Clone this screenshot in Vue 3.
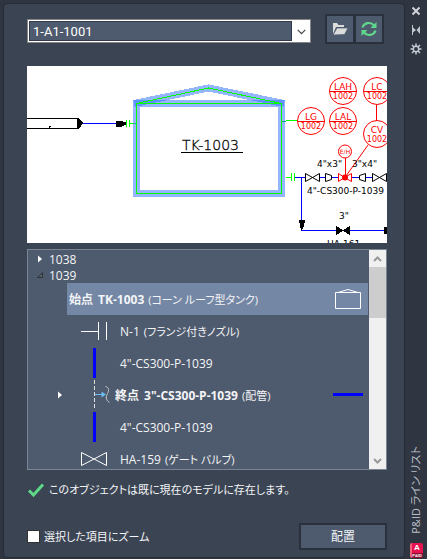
<script setup>
import { ref } from 'vue'

const line = ref('1-A1-1001')
const zoomToItem = ref(false)

const items = [
  { icon: 'none', role: '始点', tag: 'TK-1003', kind: '(コーン ルーフ型タンク)', symbol: 'tank', selected: true },
  { icon: 'nozzle', tag: 'N-1', kind: '(フランジ付きノズル)' },
  { icon: 'pipe', tag: '4"-CS300-P-1039' },
  { icon: 'branch', role: '終点', tag: '3"-CS300-P-1039', kind: '(配管)', symbol: 'pipe', expandable: true },
  { icon: 'pipe', tag: '4"-CS300-P-1039' },
  { icon: 'valve', tag: 'HA-159', kind: '(ゲート バルブ)' }
]

const balloons = [
  { x: 343, y: 91, top: 'LAH', bar: true },
  { x: 377, y: 91, top: 'LC', bar: true },
  { x: 311, y: 121, top: 'LG', bar: true },
  { x: 343, y: 121, top: 'LAL', bar: true },
  { x: 377, y: 134, top: 'CV', bar: false }
]
</script>

<template>
  <div class="palette">
    <main class="panel">
      <div class="toolbar">
        <div class="combo">
          <select v-model="line" aria-label="ライン番号">
            <option>1-A1-1001</option>
          </select>
          <svg class="chevron" viewBox="0 0 9 6" aria-hidden="true"><path d="M.7.8 4.5 4.6 8.3.8" /></svg>
        </div>
        <div class="tools">
          <button type="button" aria-label="開く">
            <svg width="16" height="14" viewBox="0 0 16 14"><path d="M1 12V1h4l1.5 2H12v2H4z" fill="#dcdcdc" /><path d="M1 13 5 6h11l-3.500 6.500z" fill="#dcdcdc" stroke="#4e5a6d" stroke-width=".7" /></svg>
          </button>
          <button type="button" aria-label="更新">
            <svg width="18" height="16" viewBox="0 0 18 16"><g fill="none" stroke="#5fd88a" stroke-width="2.200"><path d="M2.500 6.500C4 1.500 11 .5 14 4.500" /><path d="M15.500 9.500C14 14.500 7 15.500 4 11.500" /></g><path d="M16.500 1v6h-6zM1.500 15V9h6z" fill="#5fd88a" /></svg>
          </button>
        </div>
      </div>

      <svg class="preview" viewBox="27 66 360 177" role="img" aria-label="P&amp;ID プレビュー">
        <g shape-rendering="crispEdges" fill="none">
          <path d="M27 118.500h50M27 128.500h50" stroke="#000" />
          <path d="M77 118h2l4 5-4 6h-2z" fill="#000" />
          <path d="M49 126h2v1h-1v1h-1z" fill="#000" />
          <path d="M83 123.500h34" stroke="#00f" />
          <path d="M116 121h5l6 2v1l-6 3h-5z" fill="#000" />
          <path d="M126.500 120v7M129.500 120v7M129 123.500h8" stroke="#0f0" />
          <g stroke="#2a6eff" stroke-opacity=".5" stroke-width="7">
            <path d="M136.500 103.500h145v90h-145z" />
            <path d="M134 103.500 208.500 88l75.500 15.500" />
          </g>
          <path d="M136.500 103.500h145v90h-145zM136.500 103.500l72-15.500 73 15.500" stroke="#0f0" />
          <path d="M282 121.500h4" stroke="#12a59a" />
          <path d="M286 120.500h12" stroke="#0f0" />
          <path d="M286 177.500h5M291.500 173v8M294.500 173v8" stroke="#0f0" />
          <path d="M295 177.500h92M301.500 177v53.500H387" stroke="#00f" />
          <path d="M299 220h6l-1 6-2 4h-1l-1-4zM336 226l7 4 7-4v9l-7-4-7 4zM384 227h3v7h-3z" fill="#000" />
        </g>
        <g fill="#fff" stroke="#000">
          <path d="M305.500 173.500l7 4 7-4v8l-7-4-7 4zM325.500 173.500l6 2v4l-6 2zM365.500 173.500l-6 2v4l6 2zM372.500 173.500l7 4 7-4v8l-7-4-7 4z" />
          <path d="M338.500 173.500l6 4 7-4v8l-7-4-6 4z" stroke="red" />
        </g>
        <circle cx="345" cy="177.500" r="3" fill="red" />
        <g fill="none" stroke="red">
          <path d="M376.500 105v16M368 145l-22 31M345.500 158v17" />
          <circle cx="345" cy="151.500" r="6.500" />
          <g v-for="b in balloons" :key="b.top">
            <circle :cx="b.x" :cy="b.y" r="13.500" />
            <path v-if="b.bar" :d="`M${b.x - 13} ${b.y + 0.5}h26`" shape-rendering="crispEdges" />
          </g>
        </g>
        <g class="cad red" text-anchor="middle">
          <template v-for="b in balloons" :key="b.top">
            <text class="letters" :x="b.x" :y="b.y - 1">{{ b.top }}</text>
            <text :x="b.x" :y="b.y + 8">1002</text>
          </template>
          <text class="tiny" x="345" y="154">E/H</text>
        </g>
        <g class="cad">
          <text class="name" x="182" y="150">TK-1003</text>
          <path d="M181 152.500h62" stroke="#000" shape-rendering="crispEdges" />
          <text x="317" y="167">4"x3"</text>
          <text x="352" y="167">3"x4"</text>
          <text x="307" y="194">4"-CS300-P-1039</text>
          <text x="339" y="219">3"</text>
          <text x="327" y="247">HA-161</text>
        </g>
      </svg>

      <div class="tree-box">
        <ul class="tree" role="tree">
          <li class="group" role="treeitem">
            <svg width="8" height="10" viewBox="0 0 8 10"><path d="M2 1.500v7l4-3.500z" fill="#fff" /></svg>
            <span>1038</span>
          </li>
          <li class="group" role="treeitem">
            <svg width="8" height="10" viewBox="0 0 8 10"><path d="M6.500 2.500v5h-5z" fill="#595f68" stroke="#2e333b" /></svg>
            <span>1039</span>
          </li>
          <li
            v-for="(item, i) in items"
            :key="i"
            class="item"
            :class="{ selected: item.selected, branch: item.expandable }"
            role="treeitem"
          >
            <svg v-if="item.expandable" class="expander" width="8" height="10" viewBox="0 0 8 10"><path d="M2 1.500v7l4-3.500z" fill="#fff" /></svg>
            <svg v-if="item.icon !== 'none'" class="icon" width="30" height="32" viewBox="0 0 30 32" fill="none">
              <path v-if="item.icon === 'nozzle'" d="M0 16.500h17.500M17.500 7v18M25.500 7v18" stroke="#fff" />
              <path v-else-if="item.icon === 'pipe'" d="M13.500 1v30" stroke="#00f" stroke-width="3" />
              <path v-else-if="item.icon === 'valve'" d="M.5 9.500 25.500 22.500V9.500L.5 22.500z" stroke="#fff" />
              <g v-else>
                <path d="M13.500 1v30" stroke="#ddd" stroke-dasharray="4 2" />
                <path d="M14 15.500h8" stroke="#6bbcf7" />
                <path d="M20.500 12.500 25 15.500l-4.500 3z" fill="#6bbcf7" />
                <path d="M24.500 7.500c4 1 3.500 4 2 7s-2.500 6 2 9" stroke="#c4c8ce" />
              </g>
            </svg>
            <span class="label">
              <b v-if="item.role"><span class="role">{{ item.role }}</span>{{ item.tag }}</b>
              <template v-else>{{ item.tag }}</template>
              <span v-if="item.kind" class="kind">{{ item.kind }}</span>
            </span>
            <svg v-if="item.symbol === 'tank'" class="symbol" width="30" height="22" viewBox="0 0 30 22">
              <path d="M2.500 4.500h25v16h-25zM5 4.500 15 1.500l10 3" fill="none" stroke="#fff" />
            </svg>
            <svg v-else-if="item.symbol" class="symbol" width="30" height="4" viewBox="0 0 30 4"><path d="M0 0h30v3H0z" fill="#00f" /></svg>
          </li>
        </ul>
        <div class="scrollbar">
          <button type="button" aria-label="上へスクロール"><svg width="9" height="6" viewBox="0 0 9 6"><path d="M1 5 4.500 1.500 8 5" /></svg></button>
          <div class="track"><div class="thumb"></div></div>
          <button type="button" aria-label="下へスクロール"><svg width="9" height="6" viewBox="0 0 9 6"><path d="M1 1 4.500 4.500 8 1" /></svg></button>
        </div>
      </div>

      <p class="status">
        <svg width="18" height="14" viewBox="0 0 18 14"><path d="M2 7.500 6.500 12 16 1.500" fill="none" stroke="#5fd88a" stroke-width="3" /></svg>
        このオブジェクトは既に現在のモデルに存在します。
      </p>

      <div class="footer">
        <label><input v-model="zoomToItem" type="checkbox" />選択した項目にズーム</label>
        <button type="button" class="place">配置</button>
      </div>
    </main>

    <aside class="strip">
      <button type="button" aria-label="閉じる"><svg width="10" height="10" viewBox="0 0 10 10"><path d="M1.500 1.500l7 7M8.500 1.500l-7 7" stroke="#d0d3d8" stroke-width="2" /></svg></button>
      <button type="button" aria-label="自動的に隠す"><svg width="10" height="10" viewBox="0 0 10 10" fill="#c2c6cc"><path d="M1 0h1v10H1zM2 2.500 5 5 2 7.500zM9 1v8L5.500 5z" /></svg></button>
      <button type="button" aria-label="プロパティ"><svg width="12" height="12" viewBox="0 0 12 12" fill="none" stroke="#c8ccd2"><circle cx="6" cy="6" r="2.700" stroke-width="1.400" /><path d="M6 .5v2.500M6 9v2.500M.5 6H3M9 6h2.500M2 2l2 2M8 8l2 2M10 2 8 4M4 8l-2 2" stroke-width="1.500" /></svg></button>
      <h1>P&amp;ID ライン リスト</h1>
      <div class="logo"><b>A</b><small>P&amp;ID</small></div>
    </aside>
  </div>
</template>

<style>
body {
  margin: 0;
  background: #2f3541;
}
</style>

<style scoped>
* {
  box-sizing: border-box;
}
.palette {
  display: grid;
  grid-template-columns: minmax(0, 1fr) 22px;
  height: 100vh;
  min-height: 480px;
  padding: 3px 0 1px 3px;
  background: #2f3541;
  color: #f4f5f7;
  font: 12px/16px "Open Sans", "Noto Sans CJK JP", sans-serif;
  font-feature-settings: "palt";
}
button {
  padding: 0;
  border: 0;
  color: inherit;
  font: inherit;
  background: none;
  display: flex;
  align-items: center;
  justify-content: center;
}
.panel {
  display: flex;
  flex-direction: column;
  min-height: 0;
  padding: 10px 17px 7px 23px;
  background: #3b4453;
  border: 1px solid #262c36;
  border-radius: 4px;
}
.toolbar {
  display: flex;
  align-items: center;
  gap: 14px;
  padding-right: 3px;
  margin-bottom: 22px;
}
.combo {
  position: relative;
  flex: 1;
  height: 24px;
  margin-top: 3px;
  padding: 1px;
  border: 1px solid #858585;
  background: #fff;
}
.combo select {
  appearance: none;
  display: block;
  width: calc(100% - 17px);
  height: 20px;
  padding: 1px 3px 0;
  border: 1px solid #343c4b;
  border-radius: 0;
  background: #4e5a6d;
  color: #fff;
  font: 13px/18px Roboto, sans-serif;
}
.chevron {
  position: absolute;
  right: 4px;
  top: 9px;
  width: 9px;
  height: 6px;
  fill: none;
  stroke: #444;
  stroke-width: 1.2;
  pointer-events: none;
}
.tools {
  display: flex;
  gap: 3px;
  padding: 2px;
  background: #2a303c;
}
.tools button {
  width: 26px;
  height: 26px;
  background: #4e5a6d;
}
.preview {
  display: block;
  flex: none;
  width: 100%;
  background: #fff;
}
.cad {
  font: 9px "DejaVu Sans", sans-serif;
  fill: #000;
}
.red {
  fill: red;
  font-size: 8px;
}
.letters {
  font-size: 9px;
}
.tiny {
  font-size: 6px;
}
.name {
  font-size: 14px;
  font-weight: 200;
  stroke: #000;
  stroke-width: 0.3;
}
.tree-box {
  display: flex;
  flex: 1;
  min-height: 0;
  margin-top: 6px;
  border: 1px solid #7b8493;
  background: #4e5a6d;
  overflow: hidden;
}
.tree {
  flex: 1;
  margin: 0;
  padding: 1px 1px 0 0;
  list-style: none;
  overflow: hidden;
}
.group {
  display: flex;
  align-items: center;
  gap: 4px;
  height: 16px;
  padding-left: 8px;
}
.group span,
.label {
  padding-top: 2px;
}
.group span {
  padding-left: 1px;
}
.item {
  display: flex;
  align-items: center;
  height: 32px;
  margin-left: 39px;
  padding: 0 5px 0 14px;
  white-space: nowrap;
}
.item.selected {
  padding-left: 2px;
  background: #7487a5;
}
.icon {
  flex: none;
  margin-right: 9px;
}
.branch {
  margin-left: 28px;
  padding-left: 0;
}
.expander {
  margin-right: 17px;
}
.branch .icon {
  margin-right: 4px;
}
.role {
  margin-right: 5px;
}
.kind {
  margin-left: 4px;
  font-size: 11px;
}
.symbol {
  margin-left: auto;
}
.scrollbar {
  display: flex;
  flex-direction: column;
  width: 17px;
  background: #f0f0f0;
}
.scrollbar button {
  height: 17px;
}
.scrollbar svg {
  fill: none;
  stroke: #999;
  stroke-width: 2;
}
.track {
  flex: 1;
}
.thumb {
  height: 51px;
  background: #cdcdcd;
}
.status {
  display: flex;
  align-items: center;
  gap: 4px;
  margin: 12px 0 25px;
  font-size: 11px;
}
.footer {
  display: flex;
  align-items: center;
  justify-content: space-between;
}
label {
  display: flex;
  align-items: center;
  gap: 4px;
  font-size: 11px;
}
input {
  appearance: none;
  width: 13px;
  height: 13px;
  margin: 0;
  border: 1px solid #333;
  background: #fff;
}
.place {
  width: 88px;
  height: 27px;
  border: 2px solid #2a303c;
  background: #4e5a6d;
}
.strip {
  display: flex;
  flex-direction: column;
  align-items: center;
  gap: 7px;
  padding-top: 2px;
}
.strip button {
  width: 14px;
  height: 12px;
}
h1 {
  margin: auto 0 2px;
  color: #b9bec6;
  font-size: 11px;
  font-weight: 400;
  line-height: 16px;
  white-space: nowrap;
  writing-mode: vertical-rl;
  text-orientation: sideways;
  transform: rotate(180deg);
}
.logo {
  display: flex;
  flex-direction: column;
  align-items: center;
  width: 13px;
  height: 15px;
  border-radius: 2px;
  border-left: 2px solid #f2607a;
  background: linear-gradient(#e5124f 10px, #8c0a32 10px);
  color: #fff;
}
.logo b {
  font: 700 8px/10px "Liberation Sans", sans-serif;
}
.logo small {
  font: 700 4px/5px "Liberation Sans", sans-serif;
}
</style>
